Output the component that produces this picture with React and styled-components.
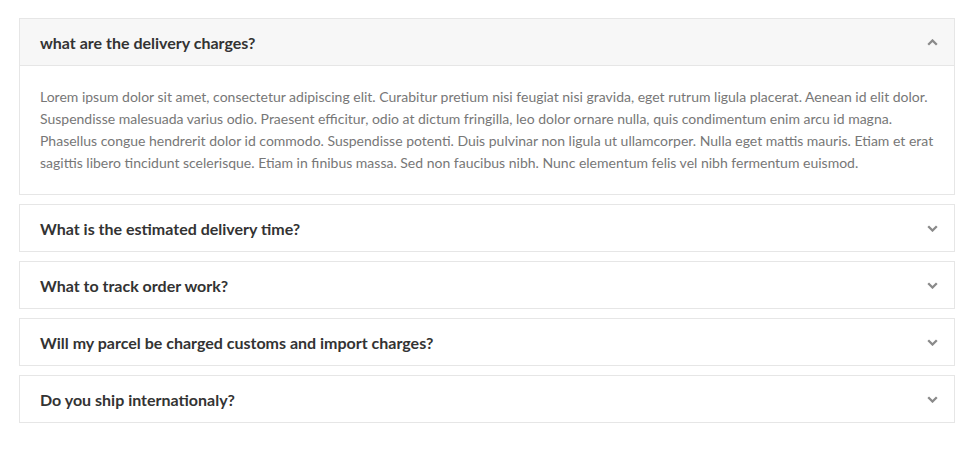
import React, { useState } from "react";
import styled, { createGlobalStyle } from "styled-components";

const GlobalStyle = createGlobalStyle`
  body {
    margin: 0;
    background: #fff;
    font-family: Lato, "Open Sans", sans-serif;
  }
`;

const faqs = [
  {
    q: "what are the delivery charges?",
    a: "Lorem ipsum dolor sit amet, consectetur adipiscing elit. Curabitur pretium nisi feugiat nisi gravida, eget rutrum ligula placerat. Aenean id elit dolor. Suspendisse malesuada varius odio. Praesent efficitur, odio at dictum fringilla, leo dolor ornare nulla, quis condimentum enim arcu id magna. Phasellus congue hendrerit dolor id commodo. Suspendisse potenti. Duis pulvinar non ligula ut ullamcorper. Nulla eget mattis mauris. Etiam et erat sagittis libero tincidunt scelerisque. Etiam in finibus massa. Sed non faucibus nibh. Nunc elementum felis vel nibh fermentum euismod.",
  },
  { q: "What is the estimated delivery time?", a: "Lorem ipsum dolor sit amet." },
  { q: "What to track order work?", a: "Lorem ipsum dolor sit amet." },
  { q: "Will my parcel be charged customs and import charges?", a: "Lorem ipsum dolor sit amet." },
  { q: "Do you ship internationaly?", a: "Lorem ipsum dolor sit amet." },
];

// small bold chevron, pointing up when the item is open
const ChevronIcon = ({ up }) => (
  <svg width="11" height="7" viewBox="0 0 11 7">
    <polyline
      points={up ? "1.2,5.8 5.5,1.5 9.8,5.8" : "1.2,1.2 5.5,5.5 9.8,1.2"}
      fill="none"
      stroke="currentColor"
      strokeWidth="2.3"
    />
  </svg>
);

const App = () => {
  const [open, setOpen] = useState(0);

  return (
    <>
      <GlobalStyle />
      <Wrapper>
        {faqs.map((item, i) => (
          <Card key={i}>
            <Header $open={open === i} onClick={() => setOpen(open === i ? -1 : i)}>
              <Question>{item.q}</Question>
              <Chevron>
                <ChevronIcon up={open === i} />
              </Chevron>
            </Header>
            {open === i && <Answer>{item.a}</Answer>}
          </Card>
        ))}
      </Wrapper>
    </>
  );
};

export default App;

const Wrapper = styled.div`
  display: flex;
  flex-direction: column;
  gap: 9px;
  padding: 18px 17px 18px 19px;
`;

const Card = styled.div`
  border: 1px solid #e6e6e6;
  background: #fff;
`;

const Header = styled.div`
  height: 46px;
  display: flex;
  align-items: center;
  justify-content: space-between;
  padding: 0 16px 0 20px;
  background: ${(p) => (p.$open ? "#f7f7f7" : "#fff")};
  border-bottom: ${(p) => (p.$open ? "1px solid #e6e6e6" : "none")};
  cursor: pointer;
`;

const Question = styled.div`
  font-size: 16px;
  font-weight: 700;
  color: #333;
`;

const Chevron = styled.span`
  display: flex;
  color: #8a8a8a;
`;

const Answer = styled.div`
  padding: 20px;
  font-size: 14px;
  line-height: 22px;
  color: #777;
`;
